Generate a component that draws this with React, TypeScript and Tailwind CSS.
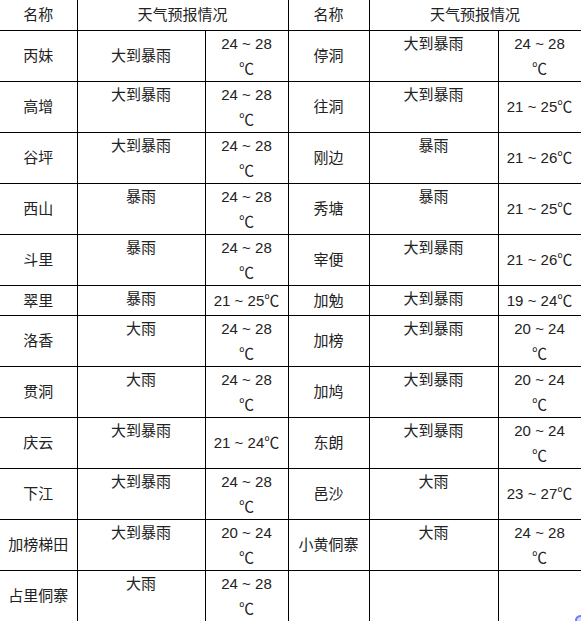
type Row = {
  name: string;
  fc: string;
  temp: string[];
  fcMid?: boolean;
};

const left: Row[] = [
  { name: '丙妹', fc: '大到暴雨', temp: ['24 ~ 28', '℃'], fcMid: true },
  { name: '高增', fc: '大到暴雨', temp: ['24 ~ 28', '℃'] },
  { name: '谷坪', fc: '大到暴雨', temp: ['24 ~ 28', '℃'] },
  { name: '西山', fc: '暴雨', temp: ['24 ~ 28', '℃'] },
  { name: '斗里', fc: '暴雨', temp: ['24 ~ 28', '℃'] },
  { name: '翠里', fc: '暴雨', temp: ['21 ~ 25℃'] },
  { name: '洛香', fc: '大雨', temp: ['24 ~ 28', '℃'] },
  { name: '贯洞', fc: '大雨', temp: ['24 ~ 28', '℃'] },
  { name: '庆云', fc: '大到暴雨', temp: ['21 ~ 24℃'] },
  { name: '下江', fc: '大到暴雨', temp: ['24 ~ 28', '℃'] },
  { name: '加榜梯田', fc: '大到暴雨', temp: ['20 ~ 24', '℃'] },
  { name: '占里侗寨', fc: '大雨', temp: ['24 ~ 28', '℃'] },
];

const right: Row[] = [
  { name: '停洞', fc: '大到暴雨', temp: ['24 ~ 28', '℃'] },
  { name: '往洞', fc: '大到暴雨', temp: ['21 ~ 25℃'] },
  { name: '刚边', fc: '暴雨', temp: ['21 ~ 26℃'] },
  { name: '秀塘', fc: '暴雨', temp: ['21 ~ 25℃'] },
  { name: '宰便', fc: '大到暴雨', temp: ['21 ~ 26℃'] },
  { name: '加勉', fc: '大到暴雨', temp: ['19 ~ 24℃'] },
  { name: '加榜', fc: '大到暴雨', temp: ['20 ~ 24', '℃'] },
  { name: '加鸠', fc: '大到暴雨', temp: ['20 ~ 24', '℃'] },
  { name: '东朗', fc: '大到暴雨', temp: ['20 ~ 24', '℃'] },
  { name: '邑沙', fc: '大雨', temp: ['23 ~ 27℃'] },
  { name: '小黄侗寨', fc: '大雨', temp: ['24 ~ 28', '℃'] },
  { name: '', fc: '', temp: [] },
];

const cell = 'border-r border-b border-black p-0 text-center';

function Cells({ r }: { r: Row }) {
  return (
    <>
      <td className={`${cell} align-middle`}>{r.name}</td>
      <td className={`${cell} ${r.fcMid ? 'align-middle' : 'align-top'}`}>{r.fc}</td>
      <td className={`${cell} align-middle`}>
        {r.temp.map((t, i) => (
          <div key={i}>{t}</div>
        ))}
      </td>
    </>
  );
}

export default function App() {
  return (
    <div className="relative w-[581px] h-[621px] overflow-hidden bg-white">
      <table
        className="table-fixed border-collapse w-[581px] text-[15px] leading-[25px] text-[#222]"
        style={{ fontFamily: '"Liberation Sans", "Noto Sans CJK SC", sans-serif' }}
      >
        <colgroup>
          <col className="w-[77px]" />
          <col className="w-[128px]" />
          <col className="w-[83px]" />
          <col className="w-[81px]" />
          <col className="w-[129px]" />
          <col className="w-[83px]" />
        </colgroup>
        <thead>
          <tr className="h-[30px]">
            <th className={`${cell} font-normal`}>名称</th>
            <th className={`${cell} font-normal`} colSpan={2}>天气预报情况</th>
            <th className={`${cell} font-normal`}>名称</th>
            <th className={`${cell} font-normal`} colSpan={2}>天气预报情况</th>
          </tr>
        </thead>
        <tbody>
          {left.map((r, i) => (
            <tr key={i} className={i === 5 ? 'h-[30px]' : 'h-[50px]'}>
              <Cells r={r} />
              <Cells r={right[i]} />
            </tr>
          ))}
        </tbody>
      </table>
      <div className="absolute right-[-5px] bottom-[-5px] w-[11px] h-[11px] rounded-full border-2 border-[#6b7cf6] bg-[#d6dbfc]" />
    </div>
  );
}
